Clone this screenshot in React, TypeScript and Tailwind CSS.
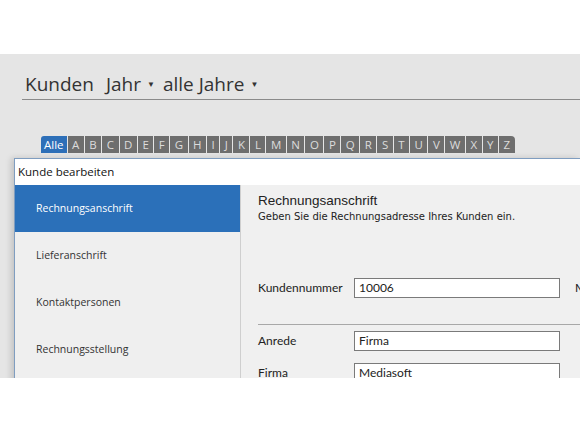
const letters = "ABCDEFGHIJKLMNOPQRSTUVWXYZ".split("");

const navItems = ["Rechnungsanschrift", "Lieferanschrift", "Kontaktpersonen", "Rechnungsstellung"];

function Field({ label, value, className = "" }: { label: string; value: string; className?: string }) {
  return (
    <div className={`flex items-center ${className}`} style={{ fontFamily: 'Lato, "Open Sans", sans-serif' }}>
      <div className="w-[96px] text-[12px] text-[#222]">{label}</div>
      <div className="w-[206px] h-[20px] border border-[#7a7a7a] bg-white px-[4px] text-[12px] leading-[18px] text-[#222]">
        {value}
      </div>
    </div>
  );
}

export default function App() {
  return (
    <div className="w-[580px] h-[435px] bg-white overflow-hidden" style={{ fontFamily: '"Open Sans", "Noto Sans", sans-serif' }}>
      <div className="h-[54px] bg-white" />
      <div className="h-[324px] bg-[#e5e5e5] overflow-hidden">
        {/* Header */}
        <div className="pl-[22px] pt-[15px]">
          <div className="flex items-center h-[31px] pl-[3px] text-[19px] text-[#333] border-b border-[#8a8a8a]">
            <span>Kunden</span>
            <span className="ml-[12px]">Jahr</span>
            <span className="ml-[6px] text-[8px]">▼</span>
            <span className="ml-[8px]">alle Jahre</span>
            <span className="ml-[6px] text-[8px]">▼</span>
          </div>
        </div>

        {/* Alphabet tabs */}
        <div className="flex mt-[36px] ml-[41px] h-[17px] text-[11.5px] leading-[17px]">
          <div className="px-[3px] bg-[#2d6fb8] text-white rounded-tl-[3px]">Alle</div>
          {letters.map((l, i) => (
            <div
              key={l}
              className={`ml-px px-[4.5px] bg-[#6e6e6e] text-[#dcdcdc] ${i === letters.length - 1 ? "rounded-tr-[4px]" : ""}`}
            >
              {l}
            </div>
          ))}
        </div>

        {/* Dialog */}
        <div className="mt-[5px] ml-[14px] border-l border-t border-[#7f9dc0] bg-white shadow-[-3px_0_6px_rgba(0,0,0,0.15)]">
          <div className="h-[26px] flex items-center pl-[3px] text-[11.5px] text-[#111] bg-white">Kunde bearbeiten</div>
          <div className="flex h-[200px]">
            {/* Nav */}
            <div className="w-[226px] shrink-0 bg-[#efefef] border-r border-[#cfcfcf]">
              {navItems.map((item, i) => (
                <div
                  key={item}
                  className={`h-[47px] flex items-center pl-[21px] text-[10.5px] ${
                    i === 0 ? "bg-[#2b70b9] text-white" : "text-[#333]"
                  }`}
                >
                  {item}
                </div>
              ))}
            </div>
            {/* Content */}
            <div className="flex-1 min-w-0 bg-[#f0f0f0] pl-[17px]">
              <div className="pt-[8px] text-[13.5px] leading-[16px] text-[#222]" style={{ fontFamily: '"Liberation Sans", Arial, sans-serif' }}>
                Rechnungsanschrift
              </div>
              <div className="text-[10px] text-[#222]" style={{ fontFamily: '"DejaVu Sans", sans-serif' }}>
                Geben Sie die Rechnungsadresse Ihres Kunden ein.
              </div>
              <div className="flex items-center mt-[54px]">
                <Field label="Kundennummer" value="10006" />
                <span className="ml-[15px] text-[12px] text-[#222]" style={{ fontFamily: 'Lato, sans-serif' }}>M</span>
              </div>
              <div className="mt-[26px] border-t border-[#a8a8a8]" />
              <Field label="Anrede" value="Firma" className="mt-[6px]" />
              <Field label="Firma" value="Mediasoft" className="mt-[12px]" />
            </div>
          </div>
        </div>
      </div>
    </div>
  );
}
